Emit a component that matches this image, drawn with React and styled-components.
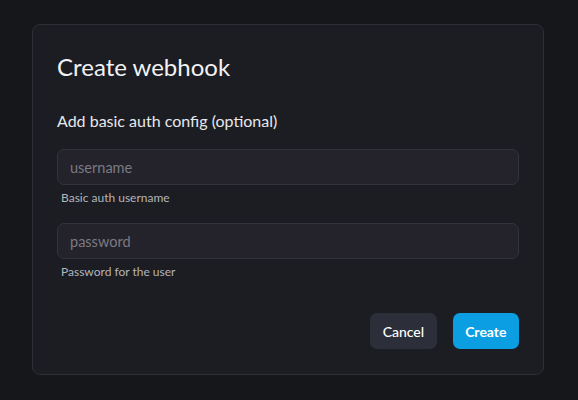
import React from 'react'
import styled, { createGlobalStyle } from 'styled-components'

const Global = createGlobalStyle`
  html, body {
    margin: 0;
    padding: 0;
    background: #16171b;
    font-family: "Lato", "Noto Sans", sans-serif;
  }
  * { box-sizing: border-box; }
`

const App = () => {
  return (
    <>
      <Global />
      <Page>
        <Dialog>
          <Title>Create webhook</Title>
          <Subtitle>Add basic auth config (optional)</Subtitle>
          <Field>
            <Input placeholder="username" />
            <Help>Basic auth username</Help>
          </Field>
          <Field>
            <Input type="password" placeholder="password" />
            <Help>Password for the user</Help>
          </Field>
          <Actions>
            <Button>Cancel</Button>
            <Button primary>Create</Button>
          </Actions>
        </Dialog>
      </Page>
    </>
  )
}

const Page = styled.div`
  width: 578px;
  height: 400px;
  padding: 24px 34px 0 32px;
`

const Dialog = styled.div`
  height: 351px;
  background: #1b1d23;
  border: 1px solid #2e2f36;
  border-radius: 8px;
  padding: 26px 24px 25px 24px;
  display: flex;
  flex-direction: column;
`

const Title = styled.h2`
  margin: 0;
  font-size: 24px;
  font-weight: 400;
  color: #f2f2f4;
  line-height: 32px;
`

const Subtitle = styled.div`
  margin-top: 27px;
  font-size: 16px;
  color: #e8e8ec;
  line-height: 22px;
`

const Field = styled.div`
  display: flex;
  flex-direction: column;
  margin-top: 17px;
  & + & { margin-top: 18px; }
`

const Input = styled.input`
  height: 36px;
  width: 100%;
  background: #24232b;
  border: 1px solid #34333b;
  border-radius: 7px;
  padding: 0 12px;
  font-family: inherit;
  font-size: 14.5px;
  color: #e8e8ec;
  outline: none;
  &::placeholder { color: #7b7a82; }
`

const Help = styled.div`
  margin-top: 6px;
  padding-left: 4px;
  font-size: 12px;
  color: #b4b4bb;
  line-height: 14px;
`

const Actions = styled.div`
  margin-top: auto;
  display: flex;
  justify-content: flex-end;
  gap: 16px;
`

const Button = styled.button`
  height: 36px;
  padding: 0 12.5px;
  border: none;
  border-radius: 7px;
  font-family: inherit;
  font-size: 14px;
  font-weight: ${p => (p.primary ? 700 : 500)};
  color: #ffffff;
  background: ${p => (p.primary ? '#0b9ee3' : '#2c2e39')};
  cursor: pointer;
`

export default App
